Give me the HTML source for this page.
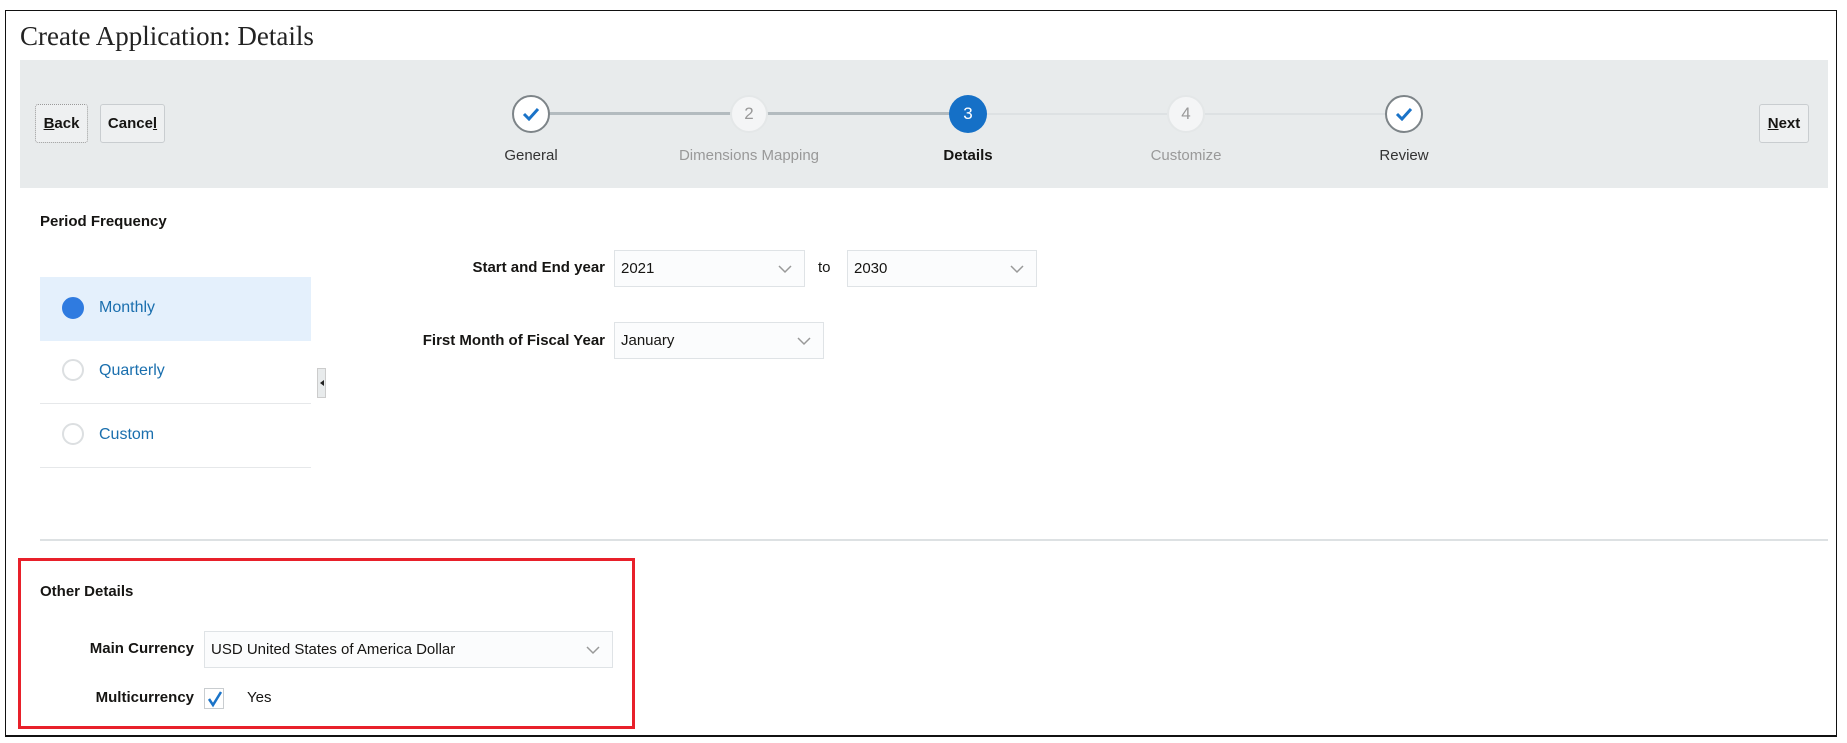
<!DOCTYPE html>
<html><head><meta charset="utf-8"><style>
*{box-sizing:border-box;margin:0;padding:0}
body{width:1847px;height:743px;background:#fff;position:relative;overflow:hidden;font-family:"Liberation Sans",sans-serif;color:#161513}
.a{position:absolute}
.frame{left:5px;top:10px;width:1832px;height:727px;border:1.5px solid #111;border-bottom:2px solid #111}
.title{left:20px;top:21px;font-family:"Liberation Serif",serif;font-size:27px;color:#222}
.band{left:20px;top:60px;width:1808px;height:128px;background:#e8ebec}
.btn{height:39px;top:104px;border:1px solid #c9cdd0;background:#eef0f1;border-radius:3px;font-weight:bold;font-size:15px;display:flex;align-items:center;justify-content:center}
.circ{width:38px;height:38px;border-radius:50%;display:flex;align-items:center;justify-content:center;font-size:17px}
.lbl{font-size:15px;top:147px;width:200px;text-align:center}
.sel{height:37px;border:1px solid #dfe3e6;background:#fbfcfd;font-size:15px;padding:0 6px;line-height:35px}
.sel svg{position:absolute;right:12px;top:14px}
.bl{font-weight:bold;font-size:15px;text-align:right}
.radio{width:22px;height:22px;border-radius:50%;border:2px solid #dcdfe1;background:#fff}
.rl{font-size:16px;color:#1a6fae}
</style></head><body>
<div class="a frame"></div>
<div class="a title">Create Application: Details</div>
<div class="a band"></div>
<div class="a btn" style="left:35px;width:53px;border-style:dotted;border-color:#999"><u>B</u>ack</div>
<div class="a btn" style="left:100px;width:65px">Cance<u>l</u></div>
<div class="a btn" style="left:1759px;width:50px"><u>N</u>ext</div>
<div class="a" style="left:531px;top:112px;width:437px;height:3px;background:#b3bbbf"></div>
<div class="a" style="left:968px;top:113px;width:436px;height:2px;background:#dde1e3"></div>
<div class="a circ" style="left:512px;top:95px;background:#fff;border:2px solid #7d8488"><svg width="18" height="14"><path d="M2 7l5 5 9-10" stroke="#1a73c8" stroke-width="3" fill="none"/></svg></div>
<div class="a circ" style="left:730px;top:95px;background:#f4f5f6;border:2px solid #e4e7e8;color:#999">2</div>
<div class="a circ" style="left:949px;top:95px;background:#1570c7;color:#fff">3</div>
<div class="a circ" style="left:1167px;top:95px;background:#f4f5f6;border:2px solid #e4e7e8;color:#999">4</div>
<div class="a circ" style="left:1385px;top:95px;background:#fff;border:2px solid #7d8488"><svg width="18" height="14"><path d="M2 7l5 5 9-10" stroke="#1a73c8" stroke-width="3" fill="none"/></svg></div>
<div class="a lbl" style="left:431px;color:#333">General</div>
<div class="a lbl" style="left:649px;color:#999">Dimensions Mapping</div>
<div class="a lbl" style="left:868px;font-weight:bold">Details</div>
<div class="a lbl" style="left:1086px;color:#999">Customize</div>
<div class="a lbl" style="left:1304px;color:#333">Review</div>

<div class="a" style="left:40px;top:213px;font-weight:bold;font-size:15px">Period Frequency</div>
<div class="a" style="left:40px;top:277px;width:271px;height:64px;background:#e4f0fc"></div>
<div class="a radio" style="left:62px;top:297px;background:#2f7be0;border-color:#2f7be0"></div>
<div class="a rl" style="left:99px;top:299px">Monthly</div>
<div class="a radio" style="left:62px;top:359px"></div>
<div class="a rl" style="left:99px;top:362px">Quarterly</div>
<div class="a" style="left:40px;top:403px;width:271px;height:1px;background:#e6e8ea"></div>
<div class="a radio" style="left:62px;top:423px"></div>
<div class="a rl" style="left:99px;top:426px">Custom</div>
<div class="a" style="left:40px;top:467px;width:271px;height:1px;background:#e6e8ea"></div>
<div class="a" style="left:317px;top:368px;width:9px;height:30px;background:#e8ebec;border:1px solid #ccc"><div style="margin:11px 0 0 2px;width:0;height:0;border-top:3px solid transparent;border-bottom:3px solid transparent;border-right:4px solid #222"></div></div>

<div class="a bl" style="left:405px;top:259px;width:200px">Start and End year</div>
<div class="a sel" style="left:614px;top:250px;width:191px">2021<svg width="14" height="9"><path d="M1 1l6 6 6-6" stroke="#999" fill="none" stroke-width="1.5"/></svg></div>
<div class="a" style="left:818px;top:259px;font-size:15px">to</div>
<div class="a sel" style="left:847px;top:250px;width:190px">2030<svg width="14" height="9"><path d="M1 1l6 6 6-6" stroke="#999" fill="none" stroke-width="1.5"/></svg></div>
<div class="a bl" style="left:355px;top:332px;width:250px">First Month of Fiscal Year</div>
<div class="a sel" style="left:614px;top:322px;width:210px">January<svg width="14" height="9"><path d="M1 1l6 6 6-6" stroke="#999" fill="none" stroke-width="1.5"/></svg></div>

<div class="a" style="left:40px;top:539px;width:1788px;height:1.5px;background:#dde1e3"></div>
<div class="a" style="left:18px;top:558px;width:617px;height:171px;border:3px solid #e8202a"></div>
<div class="a" style="left:40px;top:583px;font-weight:bold;font-size:15px">Other Details</div>
<div class="a bl" style="left:40px;top:640px;width:154px">Main Currency</div>
<div class="a sel" style="left:204px;top:631px;width:409px">USD United States of America Dollar<svg width="14" height="9"><path d="M1 1l6 6 6-6" stroke="#999" fill="none" stroke-width="1.5"/></svg></div>
<div class="a bl" style="left:40px;top:689px;width:154px">Multicurrency</div>
<div class="a" style="left:204px;top:688px;width:20px;height:21px;border:1px solid #c9cdd0;background:#fff"><svg width="18" height="18" style="position:absolute;left:1px;top:1px"><path d="M3 9l4 6 8-13" stroke="#1a73c8" stroke-width="2.5" fill="none"/></svg></div>
<div class="a" style="left:247px;top:689px;font-size:15px">Yes</div>
</body></html>
